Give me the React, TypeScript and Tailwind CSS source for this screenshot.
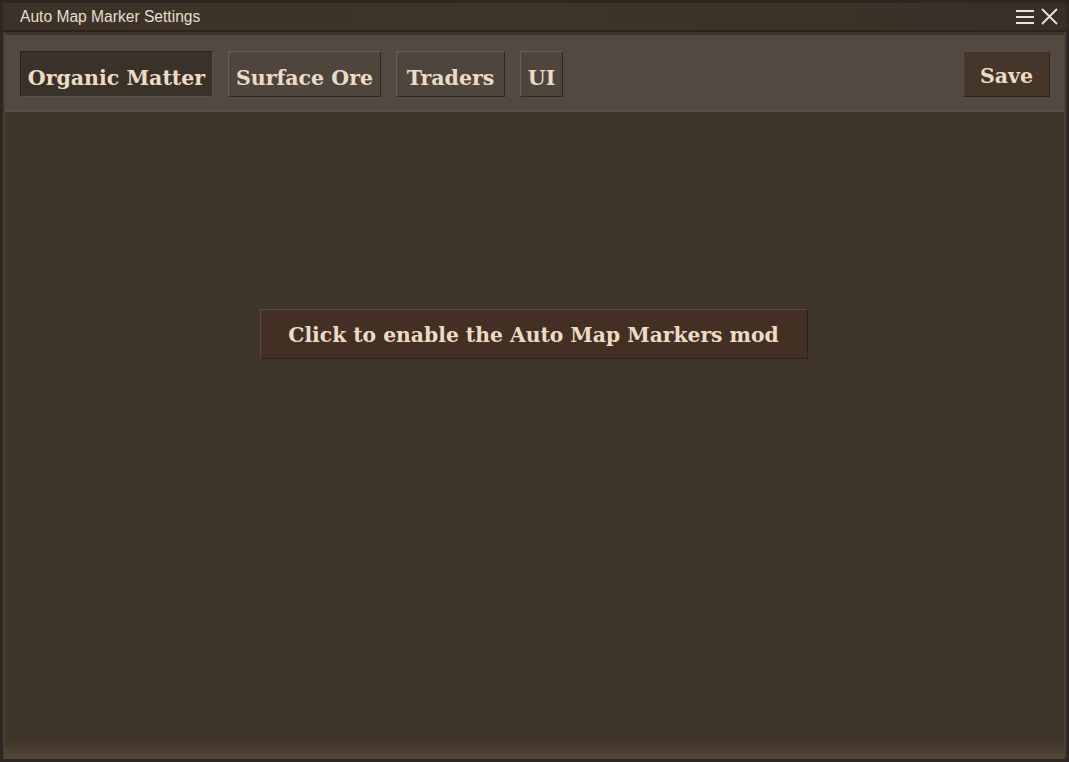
import { useState } from "react";

const TABS = [
  { name: "Organic Matter", w: "w-[193px]" },
  { name: "Surface Ore", w: "w-[153px]" },
  { name: "Traders", w: "w-[109px]" },
  { name: "UI", w: "w-[43px]" },
] as const;

const serif = { fontFamily: '"DejaVu Serif", "Liberation Serif", serif' };

export default function App() {
  const [active, setActive] = useState("Organic Matter");

  return (
    <div className="w-[1069px] h-[762px] bg-[#2e2622] p-[3px] flex flex-col overflow-hidden">
      {/* title bar */}
      <div className="h-[29px] flex items-center justify-between pl-[17px] pr-[8px] bg-gradient-to-r from-[#3d3228] via-[#3f3429] to-[#3a2f26] border-b-2 border-[#2b231e]">
        <span
          className="text-[15.6px] text-[#e6ddd0] leading-none"
          style={{ fontFamily: '"Liberation Sans", Arial, sans-serif' }}
        >
          Auto Map Marker Settings
        </span>
        <div className="flex items-center gap-[7px] text-[#ece4d8]">
          <svg width="18" height="16" viewBox="0 0 18 16" fill="none" stroke="currentColor" strokeWidth="2">
            <path d="M0 2h18M0 8h18M0 14h18" />
          </svg>
          <svg width="17" height="17" viewBox="0 0 17 17" fill="none" stroke="currentColor" strokeWidth="1.8">
            <path d="M1 1l15 15M16 1L1 16" />
          </svg>
        </div>
      </div>

      <div className="flex-1 flex flex-col bg-[#3f3429] border-x-2 border-[#4a3f34]">
        {/* toolbar */}
        <div className="h-[77px] mt-[3px] bg-[#524a40] border-b-2 border-[#5a5146] flex items-center pl-[15px] pr-[14px]">
          <div className="flex items-center gap-[15px] mt-[2px]">
            {TABS.map((tab) => {
              const on = tab.name === active;
              return (
                <button
                  key={tab.name}
                  type="button"
                  onClick={() => setActive(tab.name)}
                  style={serif}
                  className={`${tab.w} h-[46px] pt-[10px] text-[20.5px] font-bold leading-none text-[#ecdcc6] border ${
                    on
                      ? "bg-[#3a3129] border-t-[#2a231d] border-l-[#2a231d] border-b-[#5b5247] border-r-[#5b5247]"
                      : "bg-[#4e453c] border-t-[#6a6155] border-l-[#6a6155] border-b-[#2f2822] border-r-[#2f2822]"
                  }`}
                >
                  {tab.name}
                </button>
              );
            })}
          </div>
          <button
            type="button"
            style={serif}
            className="ml-auto mt-[2px] h-[46px] w-[87px] pt-[5px] text-[20.5px] font-bold leading-none text-[#ecdcc6] bg-[#45362a] border border-t-[#5c4d40] border-l-[#5c4d40] border-b-[#2c231c] border-r-[#2c231c]"
          >
            Save
          </button>
        </div>

        {/* content */}
        <div className="flex-1 flex justify-center bg-gradient-to-b from-[#3f3429] from-[97%] to-[#554837] pt-[197px]">
          <button
            type="button"
            style={serif}
            className="h-[50px] w-[548px] ml-[-2px] pt-[2px] text-[20.3px] font-bold leading-none text-[#ecdcc6] bg-[#432f23] border border-t-[#5a4838] border-l-[#5a4838] border-b-[#2e221a] border-r-[#2e221a]"
          >
            Click to enable the Auto Map Markers mod
          </button>
        </div>
      </div>
    </div>
  );
}
